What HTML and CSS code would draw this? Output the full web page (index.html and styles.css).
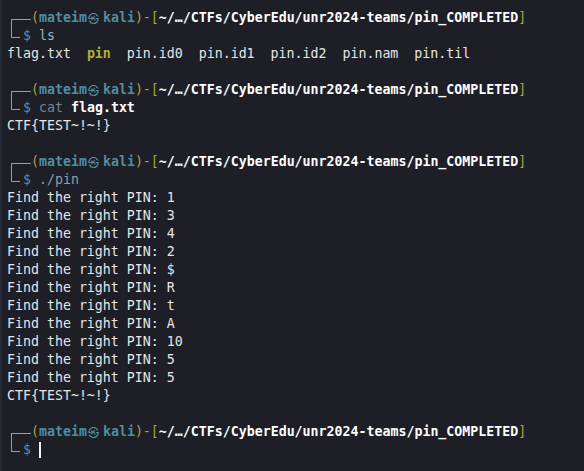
FILE: index.html
```html
<!DOCTYPE html>
<html lang="en">
<head>
<meta charset="utf-8">
<title>kali terminal</title>
<link rel="stylesheet" href="styles.css">
</head>
<body>
<main class="term">
  <div class="prompt">
    <div class="row"><span class="c-top"></span><span class="txt"><span class="br">(</span><span class="user">mateim<span class="mark">㉿</span>kali</span><span class="br">)-[</span><span class="path">~/…/CTFs/CyberEdu/unr2024-teams/pin_COMPLETED</span><span class="br">]</span></span></div>
    <div class="row"><span class="c-bot"></span><span class="txt"><span class="dollar">$</span> <span class="cmd-ls">ls</span></span></div>
  </div>
  <div class="line">flag.txt  <span class="exe">pin</span>  pin.id0  pin.id1  pin.id2  pin.nam  pin.til</div>
  <div class="line"> </div>

  <div class="prompt">
    <div class="row"><span class="c-top"></span><span class="txt"><span class="br">(</span><span class="user">mateim<span class="mark">㉿</span>kali</span><span class="br">)-[</span><span class="path">~/…/CTFs/CyberEdu/unr2024-teams/pin_COMPLETED</span><span class="br">]</span></span></div>
    <div class="row"><span class="c-bot"></span><span class="txt"><span class="dollar">$</span> <span class="cmd-cat">cat</span> <span class="arg">flag.txt</span></span></div>
  </div>
  <div class="line">CTF{TEST~!~!}</div>
  <div class="line"> </div>

  <div class="prompt">
    <div class="row"><span class="c-top"></span><span class="txt"><span class="br">(</span><span class="user">mateim<span class="mark">㉿</span>kali</span><span class="br">)-[</span><span class="path">~/…/CTFs/CyberEdu/unr2024-teams/pin_COMPLETED</span><span class="br">]</span></span></div>
    <div class="row"><span class="c-bot"></span><span class="txt"><span class="dollar">$</span> <span class="cmd-run">./pin</span></span></div>
  </div>
  <div class="line">Find the right PIN: 1</div>
  <div class="line">Find the right PIN: 3</div>
  <div class="line">Find the right PIN: 4</div>
  <div class="line">Find the right PIN: 2</div>
  <div class="line">Find the right PIN: $</div>
  <div class="line">Find the right PIN: R</div>
  <div class="line">Find the right PIN: t</div>
  <div class="line">Find the right PIN: A</div>
  <div class="line">Find the right PIN: 10</div>
  <div class="line">Find the right PIN: 5</div>
  <div class="line">Find the right PIN: 5</div>
  <div class="line">CTF{TEST~!~!}</div>
  <div class="line"> </div>

  <div class="prompt">
    <div class="row"><span class="c-top"></span><span class="txt"><span class="br">(</span><span class="user">mateim<span class="mark">㉿</span>kali</span><span class="br">)-[</span><span class="path">~/…/CTFs/CyberEdu/unr2024-teams/pin_COMPLETED</span><span class="br">]</span></span></div>
    <div class="row"><span class="c-bot"></span><span class="txt"><span class="dollar">$</span> <span class="cursor"></span></span></div>
  </div>
</main>
</body>
</html>
```
FILE: styles.css
```css
html, body {
  margin: 0;
  padding: 0;
  background: #1d1e26;
}

.term {
  box-sizing: border-box;
  min-height: 100vh;
  border-left: 2px solid #272934;
  padding: 9px 0 0 5px;
  font-family: "DejaVu Sans Mono", "Liberation Mono", monospace;
  font-size: 13.28px;
  line-height: 18px;
  color: #e6e6e8;
}

.line {
  height: 18px;
  white-space: pre;
}

.row {
  display: flex;
  height: 18px;
  white-space: pre;
}

.txt {
  white-space: pre;
}

.c-top {
  box-sizing: border-box;
  flex: none;
  width: 20px;
  height: 8px;
  margin: 10px 0 0 4px;
  border-top: 1px solid #a9a83c;
  border-left: 1px solid #a9a83c;
}

.c-bot {
  box-sizing: border-box;
  flex: none;
  width: 9px;
  height: 11px;
  margin: 0 3px 0 4px;
  border-bottom: 1px solid #a9a83c;
  border-left: 1px solid #a9a83c;
}

.br {
  color: #a9a83c;
}

.user {
  color: #4f8ea1;
  font-weight: bold;
}

.mark {
  display: inline-block;
  box-sizing: border-box;
  width: 16px;
  height: 18px;
  padding-left: 1px;
  vertical-align: top;
  font-family: "Noto Sans CJK KR", "DejaVu Sans", sans-serif;
  font-size: 11px;
  line-height: 18px;
  font-weight: normal;
}

.path {
  color: #ffffff;
  font-weight: bold;
}

.dollar {
  color: #4f8ea1;
}

.cmd-ls {
  color: #9fb3c0;
}

.cmd-cat {
  color: #6f8993;
}

.cmd-run {
  color: #8b9fa9;
}

.arg {
  color: #ffffff;
  font-weight: bold;
}

.exe {
  color: #b4ae3a;
  font-weight: bold;
}

.cursor {
  display: inline-block;
  width: 2px;
  height: 16px;
  margin-top: 1px;
  vertical-align: top;
  background: #f2f2f2;
}
```
